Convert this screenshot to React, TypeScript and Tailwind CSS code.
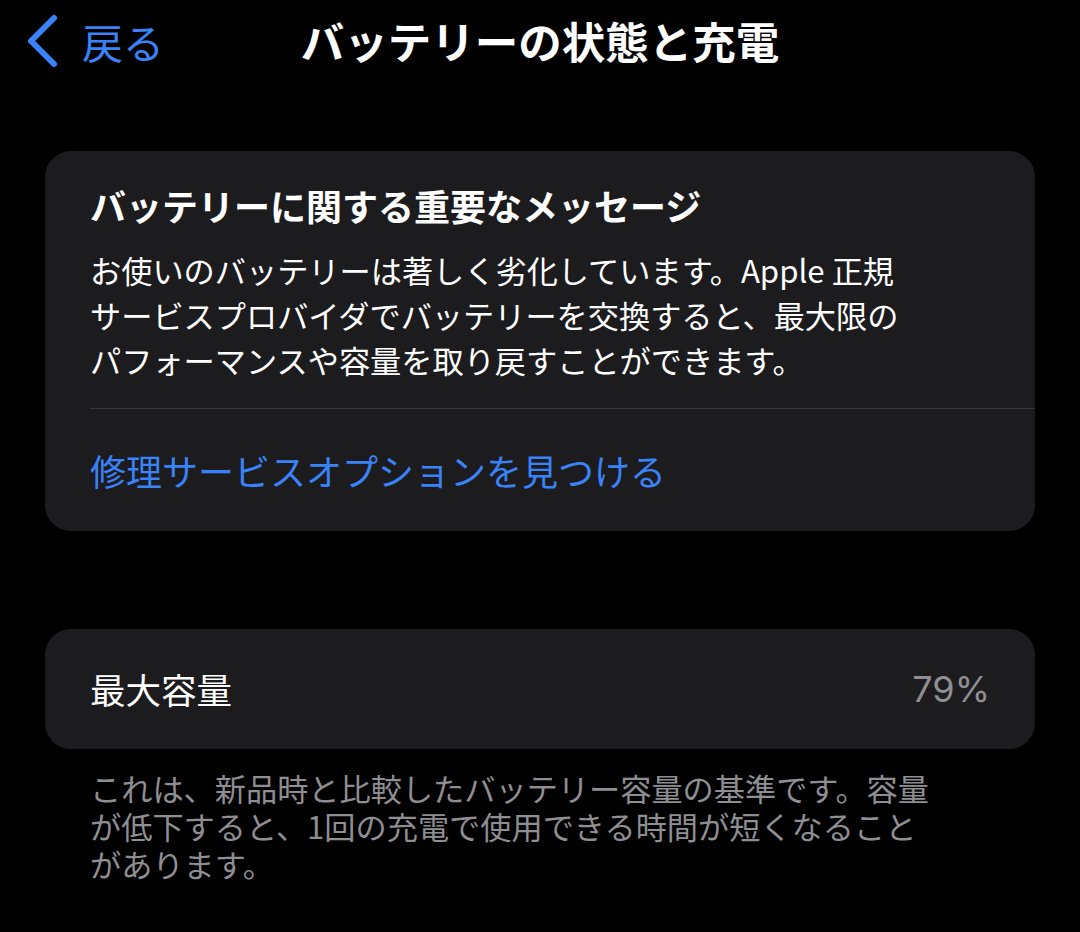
export default function App() {
  const font = { fontFamily: '"Noto Sans CJK JP", "Noto Sans", sans-serif' };

  return (
    <div className="min-h-[932px] w-[1080px] bg-black text-white" style={font}>
      {/* ナビゲーションバー */}
      <div className="relative flex h-[82px] items-center">
        <div className="flex items-center pl-[24px]">
          <svg width="36" height="56" viewBox="0 0 36 56" fill="none">
            <path
              d="M30 5 L7 28 L30 51"
              stroke="#3a82f7"
              strokeWidth="6"
              strokeLinecap="round"
              strokeLinejoin="round"
            />
          </svg>
          <span className="ml-[22px] text-[41px] leading-none text-[#3a82f7]">戻る</span>
        </div>
        <div className="pointer-events-none absolute left-0 right-0 top-0 flex h-[82px] items-center justify-center">
          <span className="text-[43.5px] font-bold leading-none">バッテリーの状態と充電</span>
        </div>
      </div>

      <div className="px-[45px] pt-[69px]">
        {/* メッセージカード */}
        <div className="overflow-hidden rounded-[26px] bg-[#1c1c1e]">
          <div className="px-[45px] pt-[32px]">
            <div className="text-[36px] font-bold leading-[44px]">バッテリーに関する重要なメッセージ</div>
            <div className="mt-[20px] whitespace-nowrap text-[31.2px] leading-[45px]">
              <div>お使いのバッテリーは著しく劣化しています。Apple 正規</div>
              <div>サービスプロバイダでバッテリーを交換すると、最大限の</div>
              <div>パフォーマンスや容量を取り戻すことができます。</div>
            </div>
          </div>
          <div className="ml-[45px] mt-[26px] h-px bg-[#38383a]" />
          <div className="py-[39px] pl-[45px] text-[36px] leading-[44px] text-[#3a82f7]">修理サービスオプションを見つける</div>
        </div>

        {/* 最大容量 */}
        <div className="mt-[98px] flex h-[120px] items-center justify-between rounded-[26px] bg-[#1c1c1e] px-[45px]">
          <span className="text-[35.5px] leading-none">最大容量</span>
          <span className="text-[36px] leading-none text-[#8e8e93]" style={{ fontFamily: '"Inter", "Noto Sans", sans-serif' }}>
            79%
          </span>
        </div>

        <div className="whitespace-nowrap px-[45px] pt-[20px] text-[31.2px] leading-[38px] text-[#8e8e93]">
          <div>これは、新品時と比較したバッテリー容量の基準です。容量</div>
          <div>が低下すると、1回の充電で使用できる時間が短くなること</div>
          <div>があります。</div>
        </div>
      </div>
    </div>
  );
}
